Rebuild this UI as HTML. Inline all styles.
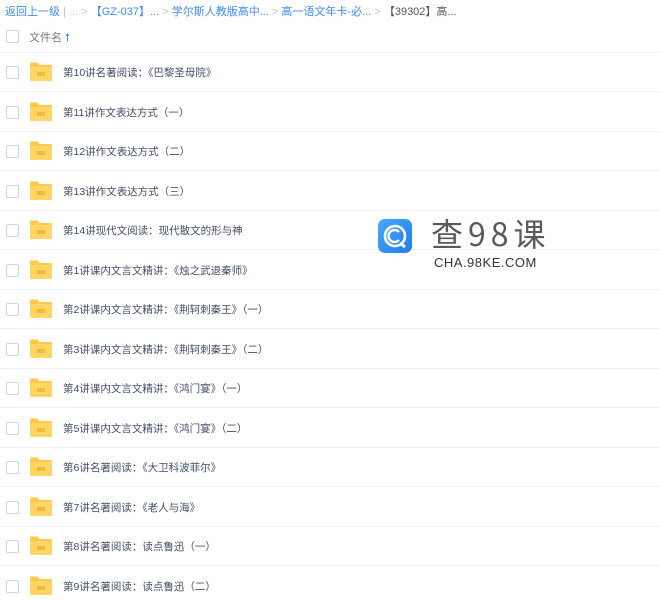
<!DOCTYPE html>
<html><head><meta charset="utf-8"><style>
body{margin:0;width:660px;height:600px;background:#fff;font-family:"Liberation Sans","Noto Sans CJK SC",sans-serif;position:relative;overflow:hidden}
.bc{position:absolute;left:5px;top:3px;font-size:11px;color:#3b8cff;white-space:nowrap}
.bc .g{color:#c0c4cc}.bc .d{color:#555}
.cb{position:absolute;left:6px;width:11px;height:11px;border:1px solid #d0d4dc;border-radius:2px;background:#fff}
.hdr{position:absolute;left:29px;top:29px;font-size:11px;color:#777}
.line{position:absolute;left:0;width:660px;height:1px;background:#f0f2f5}
.fold{position:absolute;left:29px;width:24px;height:19px}
.t{position:absolute;left:63px;font-size:10.5px;color:#424e67;white-space:nowrap}
</style></head><body>
<div class="bc">返回上一级 <span class="g">|</span> <span class="g">... &gt;</span> 【GZ-037】... <span class="g">&gt;</span> 学尔斯人教版高中... <span class="g">&gt;</span> 高一语文年卡-必... <span class="g">&gt;</span> <span class="d">【39302】高...</span></div>
<div class="cb" style="top:30px"></div>
<div class="hdr">文件名 <span style="color:#3b8cff">🠕</span></div>
<div class="line" style="top:52px"></div>
<div id="rows"></div>
<div style="position:absolute;left:378px;top:219px;width:34px;height:34px;border-radius:7px;background:linear-gradient(135deg,#4aa8ff,#1f7cf0)">
<svg width="34" height="34" viewBox="0 0 34 34"><circle cx="17" cy="17" r="10" fill="none" stroke="#fff" stroke-width="2.6"/><path d="M21 13a6 6 0 1 0 0 8" fill="none" stroke="#fff" stroke-width="2.4"/><path d="M22 24l5 4" stroke="#fff" stroke-width="3"/></svg></div>
<div style="position:absolute;left:431px;top:210px;font-size:32px;font-weight:normal;color:#5a5a5a;letter-spacing:5px;font-family:'Noto Sans CJK SC','Liberation Sans',sans-serif">查98课</div>
<div style="position:absolute;left:434px;top:255px;font-size:13px;color:#333;letter-spacing:0.5px">CHA.98KE.COM</div>
<script>
var n=["第10讲名著阅读：《巴黎圣母院》","第11讲作文表达方式（一）","第12讲作文表达方式（二）","第13讲作文表达方式（三）","第14讲现代文阅读：现代散文的形与神","第1讲课内文言文精讲：《烛之武退秦师》","第2讲课内文言文精讲：《荆轲刺秦王》（一）","第3讲课内文言文精讲：《荆轲刺秦王》（二）","第4讲课内文言文精讲：《鸿门宴》（一）","第5讲课内文言文精讲：《鸿门宴》（二）","第6讲名著阅读：《大卫科波菲尔》","第7讲名著阅读：《老人与海》","第8讲名著阅读：读点鲁迅（一）","第9讲名著阅读：读点鲁迅（二）"];
var h="";n.forEach(function(s,i){var c=72+i*39.5;
h+='<div class="cb" style="top:'+(c-6)+'px"></div><svg class="fold" style="top:'+(c-10)+'px" viewBox="0 0 24 19"><path d="M1 2a1.5 1.5 0 0 1 1.5-1.5h6l2 2.5h11a1.5 1.5 0 0 1 1.5 1.5v12.5a1.5 1.5 0 0 1-1.5 1.5h-19a1.5 1.5 0 0 1-1.5-1.5z" fill="#ffc94a"/><path d="M1 5h22v12.5a1.5 1.5 0 0 1-1.5 1.5h-19a1.5 1.5 0 0 1-1.5-1.5z" fill="#ffd664"/><rect x="8" y="10" width="8" height="4" fill="#f5b93a"/></svg><div class="t" style="top:'+(c-7)+'px">'+s+'</div>';
if(i<13)h+='<div class="line" style="top:'+(c+19)+'px"></div>';});
document.getElementById("rows").innerHTML=h;
</script>
</body></html>
